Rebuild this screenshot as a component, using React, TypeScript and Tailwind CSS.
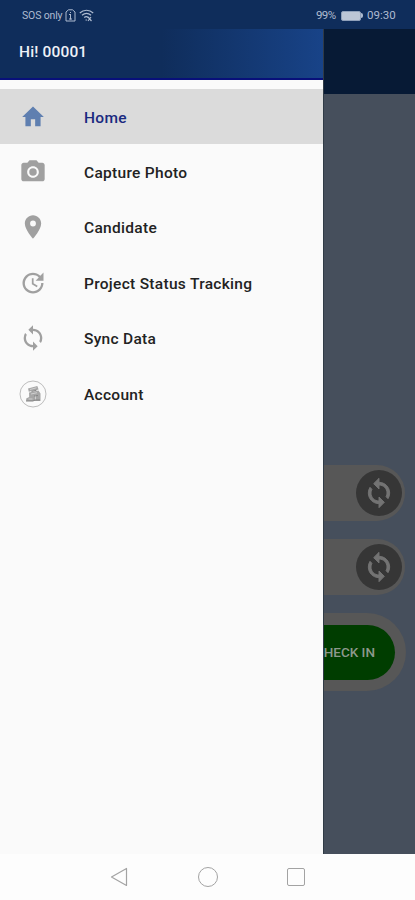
import type { ReactNode } from 'react'
import { MdPhotoCamera, MdPlace, MdSync, MdUpdate } from 'react-icons/md'

interface MenuItem {
  label: string
  icon: ReactNode
  active?: boolean
}

const HomeIcon = () => (
  <svg width="26" height="28" viewBox="0 0 24 24" preserveAspectRatio="none" className="text-[#5f7fb0]">
    <path fill="currentColor" d="M10 20v-6h4v6h5v-8h3L12 3 2 12h3v8z" />
  </svg>
)

const AccountIcon = () => (
  <svg width="28" height="28" viewBox="0 0 28 28" fill="none">
    <circle cx="14" cy="14" r="13" stroke="#bdbdbd" strokeWidth="1" />
    <path fill="#a6a6a6" d="M9 8.400 18.300 6l1.300 3.400-9.800 2.400zM10 12.600l9.500-2.200 2 3v7.600H7.200v-2.500l3-1.500z" />
    <path stroke="#dadada" strokeWidth=".8" d="m11 9.500 6.500-1.700M12 14l6-1.300M9.500 19h4m3-4v5" />
    <path stroke="#858585" strokeWidth="1" d="M7 21h7l2-1h5M12.500 11.500l5-1.300M15 16l4-.5" />
  </svg>
)

// heavier arrows than the drawer's sync icon
const SyncBoldIcon = () => (
  <svg width="32" height="32" viewBox="0 0 24 24" fill="currentColor" stroke="currentColor" strokeWidth="0.7">
    <path d="M12 4V1L8 5l4 4V6c3.310 0 6 2.690 6 6 0 1.010-.25 1.970-.7 2.800l1.460 1.460A7.930 7.930 0 0 0 20 12c0-4.420-3.580-8-8-8z" />
    <path d="M12 18c-3.310 0-6-2.690-6-6 0-1.010.25-1.970.7-2.800L5.240 7.740A7.930 7.930 0 0 0 4 12c0 4.420 3.580 8 8 8v3l4-4-4-4z" />
  </svg>
)

const menuItems: MenuItem[] = [
  { label: 'Home', icon: <HomeIcon />, active: true },
  { label: 'Capture Photo', icon: <MdPhotoCamera size={28} /> },
  { label: 'Candidate', icon: <MdPlace size={28} /> },
  { label: 'Project Status Tracking', icon: <MdUpdate size={28} /> },
  { label: 'Sync Data', icon: <MdSync size={28} /> },
  { label: 'Account', icon: <AccountIcon /> },
]

const StatusBar = () => (
  <div className="flex h-[29px] shrink-0 items-center justify-between bg-[#0f2d5b] pl-[22px] pr-[18px] pt-[2px] text-[#aebbd0]">
    <div className="flex items-center">
      <span className="w-[42px] whitespace-nowrap text-[10.5px] tracking-[-0.15px]">SOS only</span>
      <svg width="11" height="13" viewBox="0 0 11 13" fill="none" stroke="currentColor" className="ml-px">
        <path d="M3.500.8h4L10 3v9H1V3z" />
        <path d="M5.500 3v1M5.500 5v5.500M4 5.500h1.500M4 10h3" />
      </svg>
      <svg width="15" height="13" viewBox="0 0 15 13" fill="none" stroke="currentColor" strokeWidth="1.2" className="ml-[3px]">
        <path d="M.8 4C4.500.3 10.500.3 14.200 4M3 6.300c2.700-2.400 6.300-2.400 9 0M5.200 8.500c1.400-1.200 2.800-1.200 4 0M6.500 11h1.500" />
        <path d="m9 8 3.500 4M12 8l-3 4" />
      </svg>
    </div>
    <div className="flex items-center text-[11.5px]">
      <span className="w-[21px] whitespace-nowrap tracking-[-0.6px]">99%</span>
      <div className="ml-[4px] h-[10px] w-[20px] rounded-[2px] border border-[#8fa0ba] bg-[#bcc6d6]" />
      <div className="h-[5px] w-[2px] rounded-r-sm bg-[#aebbd0]" />
      <span className="ml-[4px] w-[30px] whitespace-nowrap">09:30</span>
    </div>
  </div>
)

const Drawer = () => (
  <aside className="flex w-[324px] shrink-0 flex-col border-r border-[#303b46] bg-[#fafafa]">
    <div className="flex h-[51px] items-center border-b-2 border-[#08107a] bg-linear-to-r from-[#0f2d5b] from-50% to-[#184388] pb-[2px] pl-[19px]">
      <span className="text-[15.5px] font-medium tracking-[0.15px] text-[#eef1f7]">Hi! 00001</span>
    </div>
    <nav className="pt-[9px]">
      {menuItems.map(({ label, icon, active }) => (
        <div
          key={label}
          className={`flex h-[55.4px] items-center ${active ? 'bg-[#dbdbdb] text-[#1a2a80]' : 'text-[#222222]'}`}
        >
          <div className="ml-[19px] flex w-[28px] justify-center text-[#a0a0a0]">{icon}</div>
          <span className="ml-[37px] whitespace-nowrap pt-[3px] text-[15.5px] font-medium tracking-[0.3px]">{label}</span>
        </div>
      ))}
    </nav>
  </aside>
)

const SyncField = () => (
  <div className="flex h-[56px] w-[81px] items-center justify-end rounded-r-full bg-[#575757] pr-[3px]">
    <div className="flex size-[46px] items-center justify-center rounded-full bg-[#363636] text-[#737373]">
      <SyncBoldIcon />
    </div>
  </div>
)

const HomeScreen = () => (
  <main className="flex flex-1 flex-col overflow-hidden bg-[#464f5c]">
    <div className="h-[65px] shrink-0 bg-[#071a35]" />
    <div className="flex flex-col pt-[371px]">
      <SyncField />
      <div className="mt-[18px]">
        <SyncField />
      </div>
      <div className="mt-[18px] flex h-[78px] w-[82px] items-center rounded-r-full bg-[#575757] pr-[11px]">
        <div className="flex h-[55px] w-full items-center justify-end overflow-hidden rounded-r-full bg-[#003d00] pr-[20px]">
          <span className="whitespace-nowrap text-[13.5px] font-medium text-[#8d998d]">CHECK IN</span>
        </div>
      </div>
    </div>
  </main>
)

const NavigationBar = () => (
  <div className="flex h-[46px] shrink-0 items-center bg-[#fdfdfd] pl-[110px] text-[#a3a3a3]">
    <svg width="19" height="20" viewBox="0 0 19 20" fill="none" stroke="currentColor" strokeWidth="1.2" strokeLinejoin="round">
      <path d="M1.500 10 16.500 1.500v17z" />
    </svg>
    <div className="ml-[69px] size-[20px] rounded-full border border-current" />
    <div className="ml-[69px] size-[18px] rounded-[2px] border border-current" />
  </div>
)

export default function App() {
  return (
    <div className="flex h-[900px] w-[415px] flex-col overflow-hidden font-['Roboto',sans-serif]">
      <StatusBar />
      <div className="flex min-h-0 flex-1">
        <Drawer />
        <HomeScreen />
      </div>
      <NavigationBar />
    </div>
  )
}
